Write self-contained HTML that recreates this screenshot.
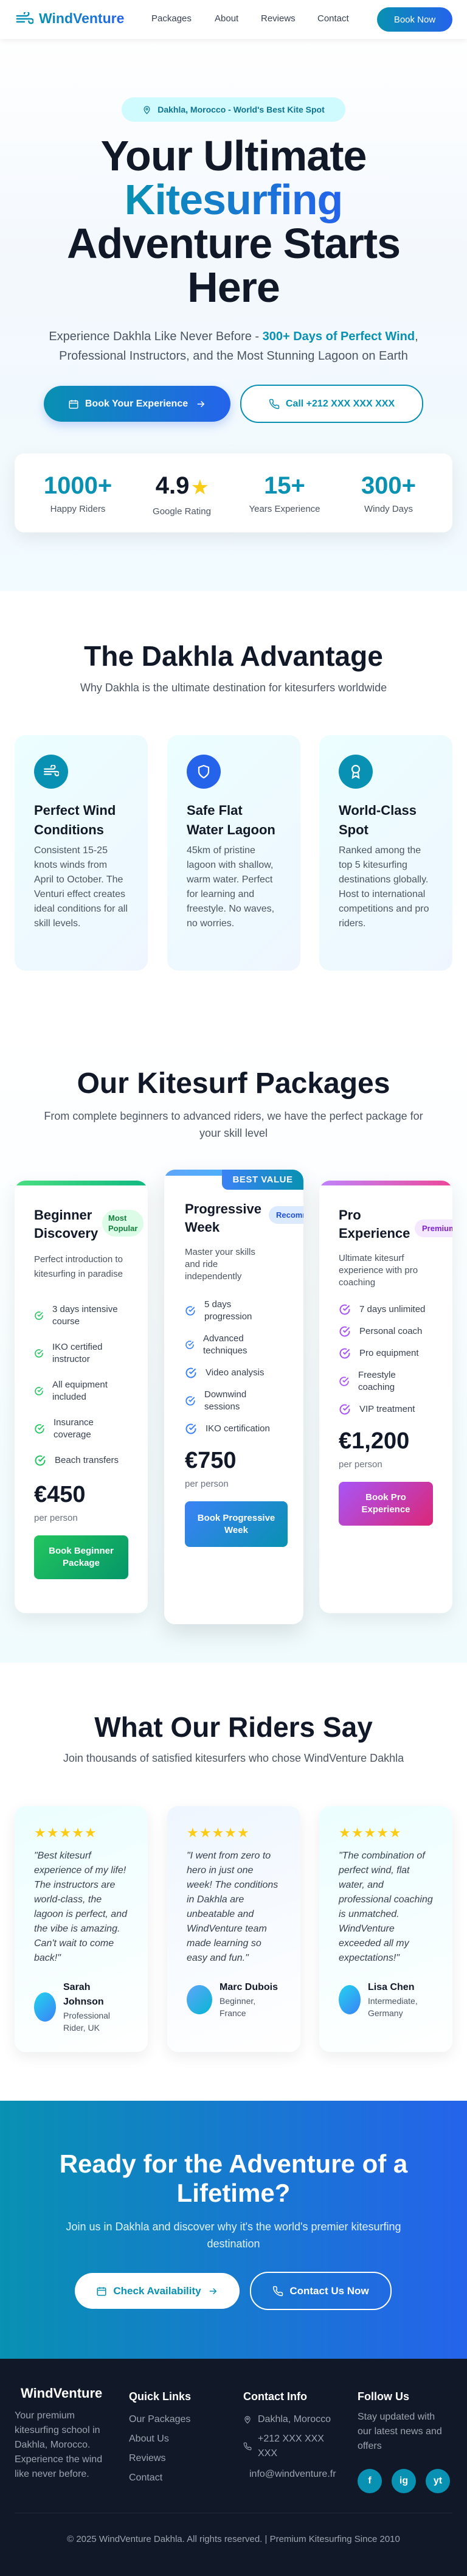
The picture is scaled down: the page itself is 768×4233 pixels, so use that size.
<!DOCTYPE html>
<html><head><meta charset="utf-8">
<style>
*{box-sizing:border-box;margin:0;padding:0}
body{width:768px;height:4233px;position:relative;font-family:"Liberation Sans",Arial,sans-serif;color:#111827;background:#fff;overflow:hidden}
.abs{position:absolute}
.c{text-align:center}
.grad{background:linear-gradient(90deg,#0891b2,#2563eb);-webkit-background-clip:text;background-clip:text;color:transparent}
nav{position:absolute;top:0;left:0;width:768px;height:64px;background:#fff;box-shadow:0 2px 10px rgba(0,0,0,.08);z-index:5}
nav a{position:absolute;top:22px;font-size:15px;color:#374151;text-decoration:none}
.hero{position:absolute;top:64px;left:0;width:768px;height:907px;background:linear-gradient(180deg,#fff 0%,#f3f8fd 40%,#f2fbff 100%)}
.btnp{position:absolute;border-radius:30px;display:flex;align-items:center;justify-content:center;font-weight:bold}
.stat{position:absolute;top:776px;width:180px;text-align:center}
.stat b{display:block;font-size:40px;color:#0891b2;line-height:44px}
.stat span{display:block;font-size:15px;color:#4b5563;margin-top:8px}
.fcard{position:absolute;top:1208px;width:219px;height:387px;border-radius:18px;background:linear-gradient(135deg,#ecfeff,#eff6ff);padding:32px}
.fcard .ic{width:56px;height:56px;border-radius:50%;display:flex;align-items:center;justify-content:center}
.fcard h3{font-size:22px;line-height:32px;margin-top:20px}
.fcard p{font-size:16px;line-height:24px;color:#4b5563;margin-top:6px}
.pk{position:absolute;background:#fff;border-radius:18px;box-shadow:0 10px 30px rgba(0,0,0,.08);overflow:hidden}
.pk .bar{position:absolute;top:0;left:0;right:0;height:8px}
.pk h3{font-size:22px;line-height:30px;width:118px}
.pk .bd{position:absolute;font-size:13px;font-weight:bold;border-radius:24px;padding:6px 12px;line-height:17px}
.pk .d{font-size:15px;line-height:20px;color:#4b5563;margin-top:16px;width:150px}
.pk ul{list-style:none;margin-top:24px;width:152px}
.pk li{display:flex;align-items:center;font-size:15px;line-height:20px;color:#374151;margin-bottom:16px}
.pk li svg{flex:none;margin-right:14px}
.pk .pr{font-size:38px;font-weight:bold;margin-top:28px;line-height:44px}
.pk .pp{font-size:15px;color:#6b7280;margin-top:8px}
.pk .bt{margin-top:20px;width:155px;height:72px;border-radius:8px;color:#fff;font-weight:bold;font-size:15px;line-height:20px;display:flex;align-items:center;justify-content:center;text-align:center}
.tc{position:absolute;top:2968px;width:219px;height:404px;border-radius:18px;padding:32px;box-shadow:0 8px 24px rgba(0,0,0,.07)}
.tc .st{color:#facc15;font-size:22px;letter-spacing:1px;line-height:24px}
.tc q{display:block;font-style:italic;font-size:16px;line-height:24px;color:#374151;margin-top:14px;quotes:none}
.tc .au{display:flex;align-items:center;margin-top:24px}
.tc .av{width:36px;height:48px;border-radius:50%;flex:none;margin-right:12px}
.tc .au b{display:block;font-size:16px;line-height:24px}
.tc .au span{display:block;font-size:14px;line-height:20px;color:#4b5563}
footer{position:absolute;top:3876px;left:0;width:768px;height:357px;background:#111827;color:#9ca3af}
footer h4{color:#fff;font-size:18px;position:absolute;top:52px}
footer .t{position:absolute;top:80px;font-size:16px;line-height:24px}
.soc{position:absolute;top:181px;width:40px;height:40px;border-radius:50%;background:#0891b2;color:#fff;font-weight:bold;font-size:16px;display:flex;align-items:center;justify-content:center}
</style></head><body>

<nav>
  <svg class="abs" style="left:25px;top:20px" width="30" height="22" viewBox="0 0 24 18" fill="none" stroke="#0891b2" stroke-width="2" stroke-linecap="round"><path d="M2 5h13a3 3 0 1 0-3-3"/><path d="M2 9h19a3 3 0 1 1-3 3"/><path d="M2 13h10"/></svg>
  <div class="abs grad" style="left:64px;top:17px;font-size:23px;font-weight:bold">WindVenture</div>
  <a style="left:249px">Packages</a><a style="left:353px">About</a><a style="left:429px">Reviews</a><a style="left:522px">Contact</a>
  <div class="btnp" style="left:620px;top:12px;width:124px;height:40px;background:linear-gradient(90deg,#0891b2,#2563eb);color:#fff;font-weight:normal;font-size:15px">Book Now</div>
</nav>

<div class="hero"></div>
<div class="abs" style="left:200px;top:160px;width:368px;height:40px;border-radius:20px;background:#cffafe;color:#0e7490;font-size:14px;font-weight:bold;display:flex;align-items:center;justify-content:center">
  <svg width="15" height="15" viewBox="0 0 24 24" fill="none" stroke="#0e7490" stroke-width="2" style="margin-right:10px"><path d="M12 22s7-6.5 7-12a7 7 0 0 0-14 0c0 5.5 7 12 7 12z"/><circle cx="12" cy="10" r="2.5"/></svg>Dakhla, Morocco - World's Best Kite Spot</div>
<div class="abs c" style="left:0;top:220px;width:768px;font-size:70px;font-weight:bold;line-height:72px;letter-spacing:-1px">Your Ultimate<br><span class="grad">Kitesurfing</span><br>Adventure Starts<br>Here</div>
<div class="abs c" style="left:0;top:537px;width:768px;font-size:20px;line-height:32px;color:#4b5563">Experience Dakhla Like Never Before - <b style="color:#0891b2">300+ Days of Perfect Wind</b>,<br>Professional Instructors, and the Most Stunning Lagoon on Earth</div>
<div class="btnp" style="left:72px;top:634px;width:307px;height:59px;background:linear-gradient(90deg,#0891b2,#2563eb);color:#fff;font-size:16px;box-shadow:0 6px 16px rgba(37,99,235,.25)">
  <svg width="18" height="18" viewBox="0 0 24 24" fill="none" stroke="#fff" stroke-width="2" style="margin-right:10px"><rect x="3" y="5" width="18" height="16" rx="2"/><path d="M3 10h18M8 3v4M16 3v4"/></svg>Book Your Experience
  <svg width="18" height="18" viewBox="0 0 24 24" fill="none" stroke="#fff" stroke-width="2" style="margin-left:12px"><path d="M5 12h14M13 6l6 6-6 6"/></svg></div>
<div class="btnp" style="left:395px;top:632px;width:301px;height:63px;border:2px solid #0891b2;background:#fff;color:#0891b2;font-size:16px">
  <svg width="18" height="18" viewBox="0 0 24 24" fill="none" stroke="#0891b2" stroke-width="2" style="margin-right:10px"><path d="M22 16.9v3a2 2 0 0 1-2.2 2 19.8 19.8 0 0 1-8.6-3.1 19.5 19.5 0 0 1-6-6A19.8 19.8 0 0 1 2.1 4.2 2 2 0 0 1 4.1 2h3a2 2 0 0 1 2 1.7c.1.9.4 1.8.7 2.7a2 2 0 0 1-.5 2.1L8 9.8a16 16 0 0 0 6 6l1.3-1.3a2 2 0 0 1 2.1-.4c.9.3 1.8.6 2.7.7a2 2 0 0 1 1.7 2z"/></svg>Call +212 XXX XXX XXX</div>
<div class="abs" style="left:24px;top:745px;width:720px;height:130px;background:#fff;border-radius:16px;box-shadow:0 10px 30px rgba(0,0,0,.08)"></div>
<div class="stat" style="left:38px"><b>1000+</b><span>Happy Riders</span></div>
<div class="stat" style="left:209px"><b style="color:#111827">4.9<span style="display:inline;color:#facc15;font-size:30px;margin:0 0 0 4px">★</span></b><span>Google Rating</span></div>
<div class="stat" style="left:378px"><b>15+</b><span>Years Experience</span></div>
<div class="stat" style="left:549px"><b>300+</b><span>Windy Days</span></div>

<div class="abs c" style="left:0;top:1052px;width:768px;font-size:46px;font-weight:bold;line-height:52px">The Dakhla Advantage</div>
<div class="abs c" style="left:0;top:1120px;width:768px;font-size:18px;color:#4b5563">Why Dakhla is the ultimate destination for kitesurfers worldwide</div>
<div class="fcard" style="left:24px"><div class="ic" style="background:#0891b2"><svg width="26" height="22" viewBox="0 0 24 18" fill="none" stroke="#fff" stroke-width="2" stroke-linecap="round"><path d="M2 5h13a3 3 0 1 0-3-3"/><path d="M2 9h19a3 3 0 1 1-3 3"/><path d="M2 13h10"/></svg></div><h3>Perfect Wind Conditions</h3><p>Consistent 15-25 knots winds from April to October. The Venturi effect creates ideal conditions for all skill levels.</p></div>
<div class="fcard" style="left:275px"><div class="ic" style="background:#2563eb"><svg width="24" height="24" viewBox="0 0 24 24" fill="none" stroke="#fff" stroke-width="2.2"><path d="M12 22s8-4 8-10V5l-8-3-8 3v7c0 6 8 10 8 10z"/></svg></div><h3>Safe Flat Water Lagoon</h3><p>45km of pristine lagoon with shallow, warm water. Perfect for learning and freestyle. No waves, no worries.</p></div>
<div class="fcard" style="left:525px"><div class="ic" style="background:#0891b2"><svg width="24" height="24" viewBox="0 0 24 24" fill="none" stroke="#fff" stroke-width="2.2"><circle cx="12" cy="8" r="6"/><path d="M8.2 13 7 22l5-3 5 3-1.2-9"/></svg></div><h3>World-Class Spot</h3><p>Ranked among the top 5 kitesurfing destinations globally. Host to international competitions and pro riders.</p></div>

<div class="abs" style="left:0;top:1700px;width:768px;height:1032px;background:linear-gradient(180deg,#fff 0%,#f0fbfe 100%)"></div>
<div class="abs c" style="left:0;top:1755px;width:768px;font-size:48px;font-weight:bold;line-height:52px">Our Kitesurf Packages</div>
<div class="abs c" style="left:0;top:1820px;width:768px;font-size:18px;line-height:28px;color:#4b5563">From complete beginners to advanced riders, we have the perfect package for<br>your skill level</div>

<div class="pk" style="left:24px;top:1940px;width:219px;height:711px;padding:42px 0 0 32px">
  <div class="bar" style="background:linear-gradient(90deg,#4ade80,#10b981)"></div>
  <h3>Beginner Discovery</h3>
  <div class="bd" style="left:144px;top:48px;background:#dcfce7;color:#15803d;padding:5px 10px">Most<br>Popular</div>
  <div class="d" style="line-height:24px">Perfect introduction to kitesurfing in paradise</div>
  <ul style="margin-top:36px">
    <li style="margin-bottom:22px"><svg width="16" height="16" viewBox="0 0 24 24" fill="none" stroke="#22c55e" stroke-width="2.4"><path d="M21 11v1a9 9 0 1 1-5.3-8.2"/><path d="M21 4 12 13l-3-3"/></svg>3 days intensive course</li>
    <li style="margin-bottom:22px"><svg width="16" height="16" viewBox="0 0 24 24" fill="none" stroke="#22c55e" stroke-width="2.4"><path d="M21 11v1a9 9 0 1 1-5.3-8.2"/><path d="M21 4 12 13l-3-3"/></svg>IKO certified instructor</li>
    <li style="margin-bottom:22px"><svg width="16" height="16" viewBox="0 0 24 24" fill="none" stroke="#22c55e" stroke-width="2.4"><path d="M21 11v1a9 9 0 1 1-5.3-8.2"/><path d="M21 4 12 13l-3-3"/></svg>All equipment included</li>
    <li style="margin-bottom:22px"><svg width="18" height="18" viewBox="0 0 24 24" fill="none" stroke="#22c55e" stroke-width="2.4"><path d="M21 11v1a9 9 0 1 1-5.3-8.2"/><path d="M21 4 12 13l-3-3"/></svg>Insurance coverage</li>
    <li><svg width="20" height="20" viewBox="0 0 24 24" fill="none" stroke="#22c55e" stroke-width="2.4"><path d="M21 11v1a9 9 0 1 1-5.3-8.2"/><path d="M21 4 12 13l-3-3"/></svg>Beach transfers</li>
  </ul>
  <div class="pr" style="margin-top:24px">€450</div><div class="pp">per person</div>
  <div class="bt" style="background:linear-gradient(135deg,#22c55e,#059669)">Book Beginner<br>Package</div>
</div>

<div class="pk" style="left:270px;top:1922px;width:229px;height:747px;padding:50px 0 0 34px;box-shadow:0 14px 36px rgba(0,0,0,.12)">
  <div class="bar" style="height:10px;background:linear-gradient(90deg,#60a5fa,#38bdf8)"></div>
  <div class="abs" style="left:95px;top:0;width:134px;height:33px;background:linear-gradient(90deg,#3b82f6,#0891b2);border-bottom-left-radius:10px;color:#fff;font-weight:bold;font-size:15px;display:flex;align-items:center;justify-content:center;letter-spacing:.5px">BEST VALUE</div>
  <h3 style="width:140px">Progressive Week</h3>
  <div class="bd" style="left:172px;top:60px;background:#dbeafe;color:#1d4ed8;width:80px">Recommended</div>
  <div class="d" style="width:140px;line-height:20px">Master your skills and ride independently</div>
  <ul style="margin-top:26px;width:170px">
    <li><svg width="18" height="18" viewBox="0 0 24 24" fill="none" stroke="#3b82f6" stroke-width="2.4"><path d="M21 11v1a9 9 0 1 1-5.3-8.2"/><path d="M21 4 12 13l-3-3"/></svg>5 days<br>progression</li>
    <li><svg width="16" height="16" viewBox="0 0 24 24" fill="none" stroke="#3b82f6" stroke-width="2.4"><path d="M21 11v1a9 9 0 1 1-5.3-8.2"/><path d="M21 4 12 13l-3-3"/></svg>Advanced<br>techniques</li>
    <li><svg width="20" height="20" viewBox="0 0 24 24" fill="none" stroke="#3b82f6" stroke-width="2.4"><path d="M21 11v1a9 9 0 1 1-5.3-8.2"/><path d="M21 4 12 13l-3-3"/></svg>Video analysis</li>
    <li><svg width="18" height="18" viewBox="0 0 24 24" fill="none" stroke="#3b82f6" stroke-width="2.4"><path d="M21 11v1a9 9 0 1 1-5.3-8.2"/><path d="M21 4 12 13l-3-3"/></svg>Downwind<br>sessions</li>
    <li><svg width="20" height="20" viewBox="0 0 24 24" fill="none" stroke="#3b82f6" stroke-width="2.4"><path d="M21 11v1a9 9 0 1 1-5.3-8.2"/><path d="M21 4 12 13l-3-3"/></svg>IKO certification</li>
  </ul>
  <div class="pr" style="margin-top:20px">€750</div><div class="pp">per person</div>
  <div class="bt" style="width:169px;height:75px;background:linear-gradient(135deg,#3b82f6,#0891b2)">Book Progressive<br>Week</div>
</div>

<div class="pk" style="left:525px;top:1940px;width:219px;height:711px;padding:42px 0 0 32px">
  <div class="bar" style="background:linear-gradient(90deg,#c084fc,#ec4899)"></div>
  <h3>Pro Experience</h3>
  <div class="bd" style="left:157px;top:64px;background:#f3e8ff;color:#7e22ce;width:80px">Premium</div>
  <div class="d">Ultimate kitesurf experience with pro coaching</div>
  <ul>
    <li><svg width="20" height="20" viewBox="0 0 24 24" fill="none" stroke="#a855f7" stroke-width="2.4"><path d="M21 11v1a9 9 0 1 1-5.3-8.2"/><path d="M21 4 12 13l-3-3"/></svg>7 days unlimited</li>
    <li><svg width="20" height="20" viewBox="0 0 24 24" fill="none" stroke="#a855f7" stroke-width="2.4"><path d="M21 11v1a9 9 0 1 1-5.3-8.2"/><path d="M21 4 12 13l-3-3"/></svg>Personal coach</li>
    <li><svg width="20" height="20" viewBox="0 0 24 24" fill="none" stroke="#a855f7" stroke-width="2.4"><path d="M21 11v1a9 9 0 1 1-5.3-8.2"/><path d="M21 4 12 13l-3-3"/></svg>Pro equipment</li>
    <li><svg width="18" height="18" viewBox="0 0 24 24" fill="none" stroke="#a855f7" stroke-width="2.4"><path d="M21 11v1a9 9 0 1 1-5.3-8.2"/><path d="M21 4 12 13l-3-3"/></svg>Freestyle<br>coaching</li>
    <li><svg width="20" height="20" viewBox="0 0 24 24" fill="none" stroke="#a855f7" stroke-width="2.4"><path d="M21 11v1a9 9 0 1 1-5.3-8.2"/><path d="M21 4 12 13l-3-3"/></svg>VIP treatment</li>
  </ul>
  <div class="pr" style="margin-top:20px">€1,200</div><div class="pp">per person</div>
  <div class="bt" style="background:linear-gradient(135deg,#a855f7,#db2777)">Book Pro<br>Experience</div>
</div>

<div class="abs c" style="left:0;top:2812px;width:768px;font-size:46px;font-weight:bold;line-height:52px">What Our Riders Say</div>
<div class="abs c" style="left:0;top:2879px;width:768px;font-size:18px;color:#4b5563">Join thousands of satisfied kitesurfers who chose WindVenture Dakhla</div>
<div class="tc" style="left:24px;background:linear-gradient(160deg,#ecfeff,#fff)"><div class="st">★★★★★</div><q>"Best kitesurf experience of my life! The instructors are world-class, the lagoon is perfect, and the vibe is amazing. Can't wait to come back!"</q><div class="au"><div class="av" style="background:linear-gradient(135deg,#22d3ee,#3b82f6)"></div><div><b>Sarah<br>Johnson</b><span>Professional<br>Rider, UK</span></div></div></div>
<div class="tc" style="left:275px;background:linear-gradient(160deg,#eff6ff,#fff)"><div class="st">★★★★★</div><q>"I went from zero to hero in just one week! The conditions in Dakhla are unbeatable and WindVenture team made learning so easy and fun."</q><div class="au"><div class="av" style="width:42px;height:48px;background:linear-gradient(135deg,#60a5fa,#06b6d4)"></div><div><b>Marc Dubois</b><span>Beginner,<br>France</span></div></div></div>
<div class="tc" style="left:525px;background:linear-gradient(160deg,#ecfeff,#fff)"><div class="st">★★★★★</div><q>"The combination of perfect wind, flat water, and professional coaching is unmatched. WindVenture exceeded all my expectations!"</q><div class="au"><div class="av" style="background:linear-gradient(135deg,#22d3ee,#3b82f6)"></div><div><b>Lisa Chen</b><span>Intermediate,<br>Germany</span></div></div></div>

<div class="abs" style="left:0;top:3452px;width:768px;height:424px;background:linear-gradient(90deg,#0891b2,#2563eb)"></div>
<div class="abs c" style="left:0;top:3532px;width:768px;font-size:42px;font-weight:bold;line-height:48px;color:#fff">Ready for the Adventure of a<br>Lifetime?</div>
<div class="abs c" style="left:0;top:3645px;width:768px;font-size:18px;line-height:28px;color:#e0f2fe">Join us in Dakhla and discover why it's the world's premier kitesurfing<br>destination</div>
<div class="btnp" style="left:123px;top:3735px;width:271px;height:59px;background:#fff;color:#0891b2;font-size:17px">
  <svg width="18" height="18" viewBox="0 0 24 24" fill="none" stroke="#0891b2" stroke-width="2" style="margin-right:10px"><rect x="3" y="5" width="18" height="16" rx="2"/><path d="M3 10h18M8 3v4M16 3v4"/></svg>Check Availability
  <svg width="18" height="18" viewBox="0 0 24 24" fill="none" stroke="#0891b2" stroke-width="2" style="margin-left:10px"><path d="M5 12h14M13 6l6 6-6 6"/></svg></div>
<div class="btnp" style="left:411px;top:3733px;width:233px;height:63px;border:2px solid #fff;color:#fff;font-size:17px">
  <svg width="18" height="18" viewBox="0 0 24 24" fill="none" stroke="#fff" stroke-width="2" style="margin-right:10px"><path d="M22 16.9v3a2 2 0 0 1-2.2 2 19.8 19.8 0 0 1-8.6-3.1 19.5 19.5 0 0 1-6-6A19.8 19.8 0 0 1 2.1 4.2 2 2 0 0 1 4.1 2h3a2 2 0 0 1 2 1.7c.1.9.4 1.8.7 2.7a2 2 0 0 1-.5 2.1L8 9.8a16 16 0 0 0 6 6l1.3-1.3a2 2 0 0 1 2.1-.4c.9.3 1.8.6 2.7.7a2 2 0 0 1 1.7 2z"/></svg>Contact Us Now</div>

<footer>
  <div class="abs" style="left:34px;top:44px;color:#fff;font-size:22px;font-weight:bold">WindVenture</div>
  <div class="t" style="left:24px;top:82px;width:160px">Your premium kitesurfing school in Dakhla, Morocco. Experience the wind like never before.</div>
  <h4 style="left:212px">Quick Links</h4>
  <div class="t" style="left:212px;top:84px;line-height:32px">Our Packages<br>About Us<br>Reviews<br>Contact</div>
  <h4 style="left:400px">Contact Info</h4>
  <div class="t" style="left:400px;top:84px;width:170px">
    <div style="display:flex;align-items:center;height:32px"><svg width="14" height="14" viewBox="0 0 24 24" fill="none" stroke="#9ca3af" stroke-width="2" style="margin-right:10px"><path d="M12 22s7-6.5 7-12a7 7 0 0 0-14 0c0 5.5 7 12 7 12z"/><circle cx="12" cy="10" r="2.5"/></svg>Dakhla, Morocco</div>
    <div style="display:flex;align-items:center;margin-top:4px"><svg width="14" height="14" viewBox="0 0 24 24" fill="none" stroke="#9ca3af" stroke-width="2" style="margin-right:10px;flex:none"><path d="M22 16.9v3a2 2 0 0 1-2.2 2 19.8 19.8 0 0 1-8.6-3.1 19.5 19.5 0 0 1-6-6A19.8 19.8 0 0 1 2.1 4.2 2 2 0 0 1 4.1 2h3a2 2 0 0 1 2 1.7c.1.9.4 1.8.7 2.7a2 2 0 0 1-.5 2.1L8 9.8a16 16 0 0 0 6 6l1.3-1.3a2 2 0 0 1 2.1-.4c.9.3 1.8.6 2.7.7a2 2 0 0 1 1.7 2z"/></svg><span>+212 XXX XXX<br>XXX</span></div>
    <div style="margin-top:10px;padding-left:10px">info@windventure.fr</div>
  </div>
  <h4 style="left:588px">Follow Us</h4>
  <div class="t" style="left:588px;top:84px;width:150px">Stay updated with our latest news and offers</div>
  <div class="soc" style="left:588px">f</div><div class="soc" style="left:644px">ig</div><div class="soc" style="left:700px">yt</div>
  <div class="abs" style="left:24px;top:253px;width:720px;height:1px;background:#1f2937"></div>
  <div class="abs c" style="left:0;top:288px;width:768px;font-size:15px">© 2025 WindVenture Dakhla. All rights reserved. | Premium Kitesurfing Since 2010</div>
</footer>
</body></html>
